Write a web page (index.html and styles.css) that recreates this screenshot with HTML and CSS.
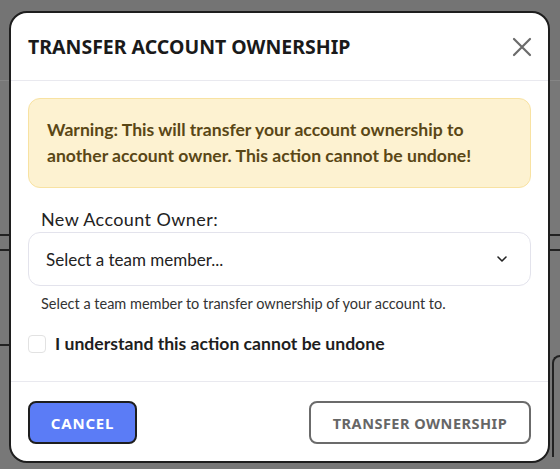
FILE: index.html
```html
<!DOCTYPE html>
<html lang="en">
<head>
    <meta charset="UTF-8">
    <meta name="viewport" content="width=device-width, initial-scale=1.0">
    <title>Transfer Account Ownership</title>
    <link rel="stylesheet" href="styles.css">
</head>
<body>

    <!-- page underneath the dialog, already dimmed -->
    <div class="page">
        <div class="page-top"></div>
        <div class="page-strip"></div>
        <div class="page-cols">
            <div class="page-col left"></div>
            <div class="page-col right"><div class="page-card"></div></div>
        </div>
    </div>

    <div class="modal">
        <div class="modal-header">
            <h2>Transfer Account Ownership</h2>
            <button class="close-btn" aria-label="Close">
                <svg width="20" height="20" viewBox="0 0 20 20">
                    <path d="M2 2 L18 18 M18 2 L2 18" stroke="#6b6b6b" stroke-width="2.2" stroke-linecap="round" fill="none"/>
                </svg>
            </button>
        </div>

        <div class="modal-body">
            <p class="warning"><strong>Warning: This will transfer your account ownership to another account owner. This action cannot be undone!</strong></p>

            <label class="field-label" for="new-owner">New Account Owner:</label>
            <div class="select" id="new-owner">
                <span>Select a team member...</span>
                <svg width="12" height="8" viewBox="0 0 12 8">
                    <path d="M2 2 L6 6 L10 2" stroke="#222" stroke-width="1.6" fill="none" stroke-linecap="round" stroke-linejoin="round"/>
                </svg>
            </div>
            <p class="hint">Select a team member to transfer ownership of your account to.</p>

            <label class="confirm">
                <span class="checkbox"></span>
                I understand this action cannot be undone
            </label>
        </div>

        <div class="modal-footer">
            <button class="btn btn-cancel">Cancel</button>
            <button class="btn btn-transfer">Transfer Ownership</button>
        </div>
    </div>

</body>
</html>
```

FILE: styles.css
```css
body {
    margin: 0;
    height: 469px;
    overflow: hidden;
    background-color: #787878;
    font-family: "Lato", "Noto Sans", sans-serif;
    color: #222;
}
.page-top {
    height: 80px;
    border-bottom: 1px solid #858585;
    background-color: #747474;
}
.page-strip {
    margin-top: 153px;
    height: 13px;
    border-top: 2px solid #222;
    border-bottom: 2px solid #222;
}
.page-cols {
    display: flex;
    justify-content: space-between;
}
.page-col.left {
    width: 20px;
    height: 93px;
    border-bottom: 2px solid #222;
}
.page-col.right {
    width: 20px;
    padding-top: 104px;
}
.page-card {
    margin-left: 12px;
    height: 100px;
    border: 2px solid #222;
    border-right: none;
    border-bottom: none;
    border-radius: 16px 0 0 0;
}

.modal {
    position: absolute;
    left: 9px;
    top: 11px;
    width: 537px;
    height: 448px;
    display: flex;
    flex-direction: column;
    background-color: white;
    border: 2px solid #1e1e1e;
    border-radius: 18px;
}
.modal-header {
    display: flex;
    align-items: center;
    justify-content: space-between;
    height: 67px;
    padding: 0 16px 0 17px;
    border-bottom: 1px solid #e9e9ef;
}
.modal-header h2 {
    margin: 0;
    font-family: "Noto Sans", sans-serif;
    font-size: 19.5px;
    font-weight: 700;
    text-transform: uppercase;
    color: #1a1a1a;
}
.close-btn {
    background: none;
    border: none;
    padding: 0;
    width: 20px;
    height: 20px;
    cursor: pointer;
}
.modal-body {
    flex: 1;
    padding: 17px 17px 0 17px;
    border-bottom: 1px solid #e9e9ef;
}
.warning {
    margin: 0;
    padding: 18px 18px;
    background-color: #fdf2d1;
    border: 1px solid #f8e2a2;
    border-radius: 12px;
    color: #5a4716;
    font-size: 17.6px;
    line-height: 26px;
}
.field-label {
    display: block;
    margin: 20px 0 2px 13px;
    font-size: 18px;
    letter-spacing: 0.4px;
}
.select {
    display: flex;
    align-items: center;
    justify-content: space-between;
    height: 52px;
    padding: 0 22px 0 17px;
    border: 1px solid #e3e3ec;
    border-radius: 12px;
    font-size: 17px;
}
.hint {
    margin: 9px 0 0 13px;
    font-size: 14.5px;
    color: #333;
}
.confirm {
    display: flex;
    align-items: center;
    gap: 9px;
    margin-top: 21px;
    font-size: 17.6px;
    font-weight: 700;
    color: #1e1e1e;
}
.checkbox {
    width: 16px;
    height: 16px;
    border: 1px solid #e2e2e2;
    border-radius: 4px;
}
.modal-footer {
    display: flex;
    justify-content: space-between;
    padding: 19px 17px 17px 17px;
}
.btn {
    height: 43px;
    border-radius: 8px;
    font-family: "Noto Sans", sans-serif;
    font-size: 15px;
    font-weight: 700;
    letter-spacing: 0.8px;
    text-transform: uppercase;
    cursor: pointer;
}
.btn-cancel {
    width: 109px;
    background-color: #5b7cf6;
    border: 2px solid #1e1e1e;
    color: white;
}
.btn-transfer {
    width: 222px;
    background-color: white;
    border: 2px solid #6b6b6b;
    color: #666;
    font-size: 14.5px;
    letter-spacing: 0.5px;
}
```
